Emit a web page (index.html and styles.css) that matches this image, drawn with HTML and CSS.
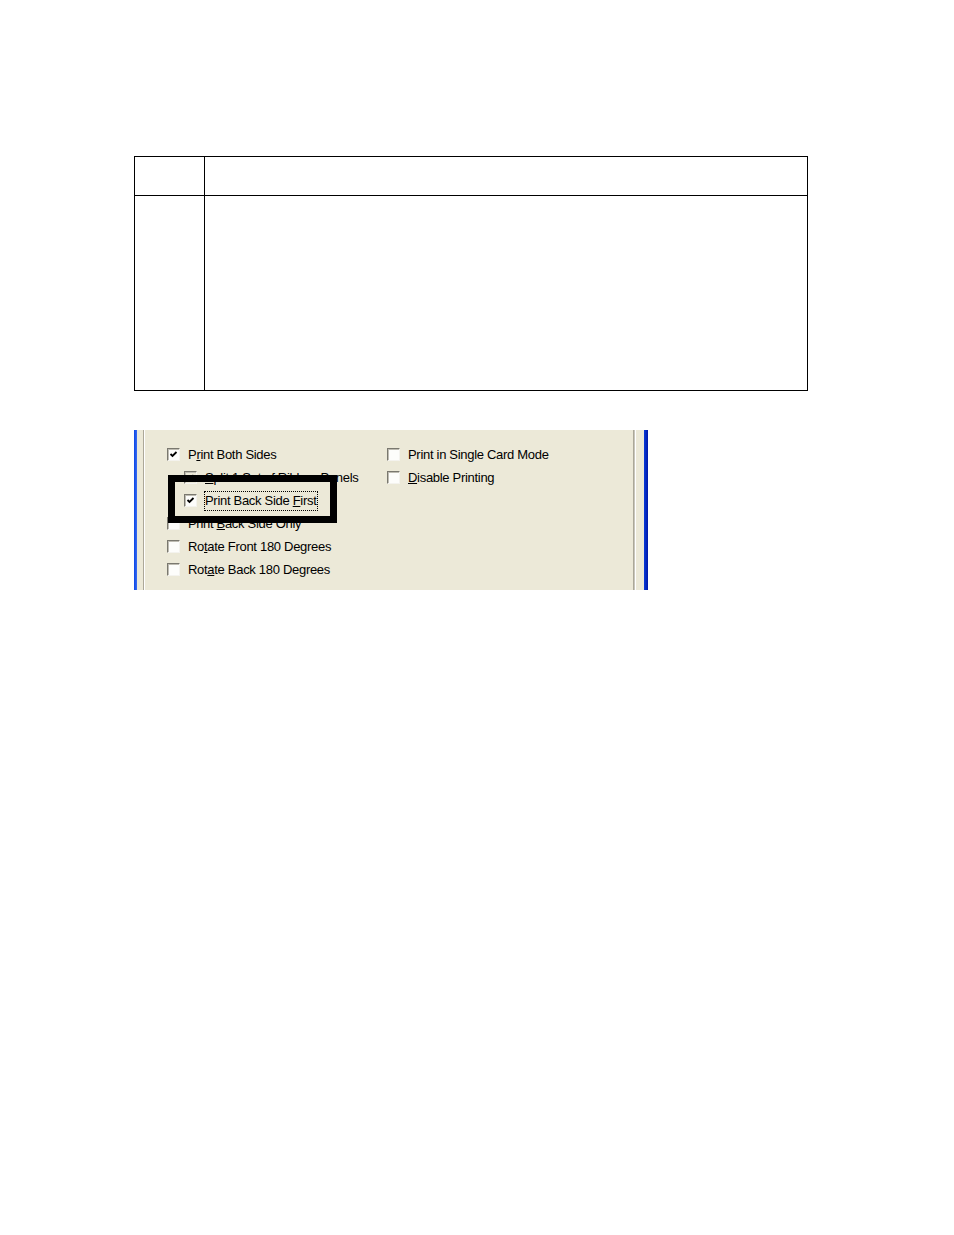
FILE: index.html
```html
<!DOCTYPE html>
<html>
<head>
<meta charset="utf-8">
<link rel="stylesheet" href="styles.css">
</head>
<body>
<div class="page">
  <table class="grid">
    <tr class="head"><td class="c1"></td><td class="c2"></td></tr>
    <tr class="body"><td class="c1"></td><td class="c2"></td></tr>
  </table>

  <div class="panel">
    <div class="edge-l"></div>
    <div class="gap-l"></div>
    <div class="gb-l"></div>
    <div class="content">
      <div class="col col-a">
        <div class="row"><span class="cb on"><svg viewBox="0 0 11 11"><polyline points="2.5,5 4.5,7 8.5,3"/></svg></span><span class="lbl">P<u>r</u>int Both Sides</span></div>
        <div class="row sub"><span class="cb on dis"><svg viewBox="0 0 11 11"><polyline points="2.5,5 4.5,7 8.5,3"/></svg></span><span class="lbl"><u>S</u>plit 1 Set of Ribbon Panels</span></div>
        <div class="row sub"><span class="cb on"><svg viewBox="0 0 11 11"><polyline points="2.5,5 4.5,7 8.5,3"/></svg></span><span class="lbl focus">Print Back Side <u>F</u>irst</span></div>
        <div class="row"><span class="cb"></span><span class="lbl">Print <u>B</u>ack Side Only</span></div>
        <div class="row"><span class="cb"></span><span class="lbl">Ro<u>t</u>ate Front 180 Degrees</span></div>
        <div class="row"><span class="cb"></span><span class="lbl">Rot<u>a</u>te Back 180 Degrees</span></div>
      </div>
      <div class="col col-b">
        <div class="row"><span class="cb"></span><span class="lbl">Print in Single Card Mode</span></div>
        <div class="row"><span class="cb"></span><span class="lbl"><u>D</u>isable Printing</span></div>
      </div>
    </div>
    <div class="gb-r"></div>
    <div class="gap-r"></div>
    <div class="edge-r"></div>
    <div class="callout"></div>
  </div>
</div>
</body>
</html>
```
FILE: styles.css
```css
html, body {
  margin: 0;
  padding: 0;
  background: #ffffff;
}
.page {
  padding-top: 156px;
  padding-left: 134px;
}
.grid {
  border-collapse: collapse;
  width: 674px;
}
.grid td {
  border: 1px solid #000;
  padding: 0;
}
.grid .c1 { width: 69px; }
.grid .head td { height: 38px; }
.grid .body td { height: 194px; }

.panel {
  position: relative;
  display: flex;
  width: 514px;
  height: 160px;
  margin-top: 39px;
  background: #ece9d8;
  font-family: "Liberation Sans", Arial, sans-serif;
  font-size: 13px;
  letter-spacing: -0.3px;
  color: #000;
}
.edge-l {
  width: 3px;
  background: linear-gradient(to right, #0a46e6, #3b6cf0);
}
.gap-l { width: 6px; }
.gb-l {
  width: 2px;
  box-sizing: border-box;
  border-left: 1px solid #aca899;
  border-right: 1px solid #ffffff;
}
.content {
  flex: 1;
  display: flex;
  padding: 13px 0 0 22px;
}
.col-a { width: 220px; }
.col-b { flex: 1; }
.row {
  height: 23px;
  display: flex;
  align-items: center;
  white-space: nowrap;
}
.row.sub { padding-left: 17px; }
.cb {
  width: 13px;
  height: 13px;
  box-sizing: border-box;
  flex: none;
  margin-right: 8px;
  border: 1px solid;
  border-color: #7a786f #f4f3ee #f4f3ee #7a786f;
  box-shadow: inset 1px 1px 0 #bebcb2;
  background: #fdfdfb;
  display: flex;
}
.cb svg {
  width: 11px;
  height: 11px;
  fill: none;
  stroke: #000;
  stroke-width: 1.8;
}
.cb.dis { background: #ece9d8; }
.cb.dis svg { stroke: #8c8a80; }
.lbl u { text-decoration: underline; }
.lbl.focus {
  margin-left: -1px;
  padding: 1px 1px 2px 0;
  border: 1px dotted #000;
}
.gb-r {
  width: 3px;
  box-sizing: border-box;
  border-left: 1px solid #aca899;
  border-right: 1px solid #ffffff;
  background: #c8c6bc;
}
.gap-r { width: 8px; }
.edge-r {
  width: 4px;
  background: linear-gradient(to right, #0a3ad8, #0018a8);
}
.callout {
  position: absolute;
  left: 34px;
  top: 45px;
  width: 169px;
  height: 48px;
  box-sizing: border-box;
  border: 7px solid #000;
}
```
